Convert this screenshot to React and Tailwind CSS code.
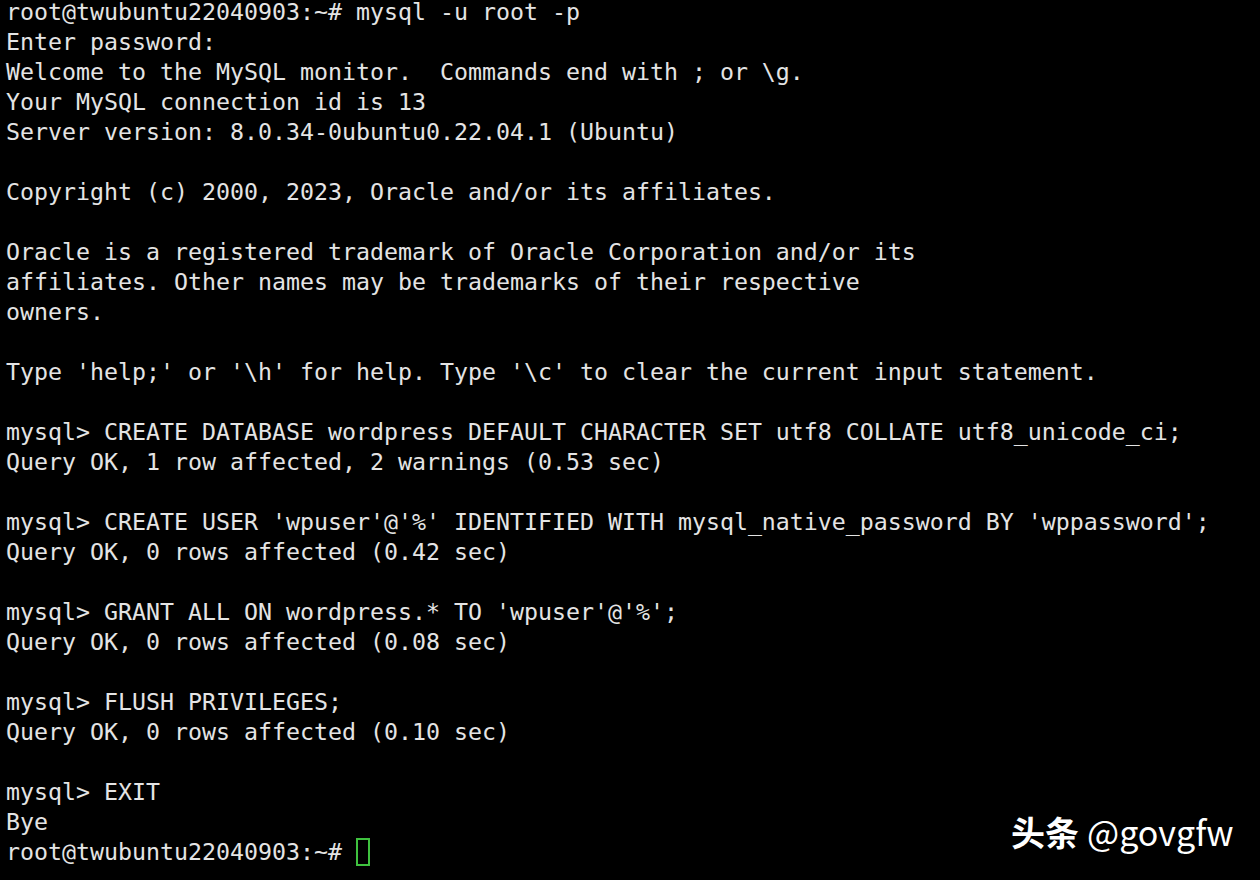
import React from "react";

const LINES = [
  "root@twubuntu22040903:~# mysql -u root -p",
  "Enter password:",
  "Welcome to the MySQL monitor.  Commands end with ; or \\g.",
  "Your MySQL connection id is 13",
  "Server version: 8.0.34-0ubuntu0.22.04.1 (Ubuntu)",
  "",
  "Copyright (c) 2000, 2023, Oracle and/or its affiliates.",
  "",
  "Oracle is a registered trademark of Oracle Corporation and/or its",
  "affiliates. Other names may be trademarks of their respective",
  "owners.",
  "",
  "Type 'help;' or '\\h' for help. Type '\\c' to clear the current input statement.",
  "",
  "mysql> CREATE DATABASE wordpress DEFAULT CHARACTER SET utf8 COLLATE utf8_unicode_ci;",
  "Query OK, 1 row affected, 2 warnings (0.53 sec)",
  "",
  "mysql> CREATE USER 'wpuser'@'%' IDENTIFIED WITH mysql_native_password BY 'wppassword';",
  "Query OK, 0 rows affected (0.42 sec)",
  "",
  "mysql> GRANT ALL ON wordpress.* TO 'wpuser'@'%';",
  "Query OK, 0 rows affected (0.08 sec)",
  "",
  "mysql> FLUSH PRIVILEGES;",
  "Query OK, 0 rows affected (0.10 sec)",
  "",
  "mysql> EXIT",
  "Bye",
];

const App = () => {
  return (
    <div className="relative w-[1260px] h-[880px] bg-black overflow-hidden">
      <div className="pl-[6px] text-[#e4e4e4] text-[23.25px] leading-[30px] font-['DejaVu_Sans_Mono',monospace] whitespace-pre">
        {LINES.map((line, i) => (
          <div
            key={i}
            className={i === 0 ? "h-[27px] leading-[24px]" : "h-[30px]"}
          >
            {line}
          </div>
        ))}
        <div className="h-[30px] flex items-center">
          <span>root@twubuntu22040903:~# </span>
          <span className="inline-block w-[14px] h-[28px] border-2 border-[#3fc23f]" />
        </div>
      </div>

      {/* watermark */}
      <div className="absolute left-[1011px] top-[810px] flex items-baseline gap-[8px] text-white text-[34px] leading-[44px] font-['Noto_Sans_CJK_SC',sans-serif]">
        <span className="font-bold">头条</span>
        <span className="font-normal">@govgfw</span>
      </div>
    </div>
  );
};

export default App;
